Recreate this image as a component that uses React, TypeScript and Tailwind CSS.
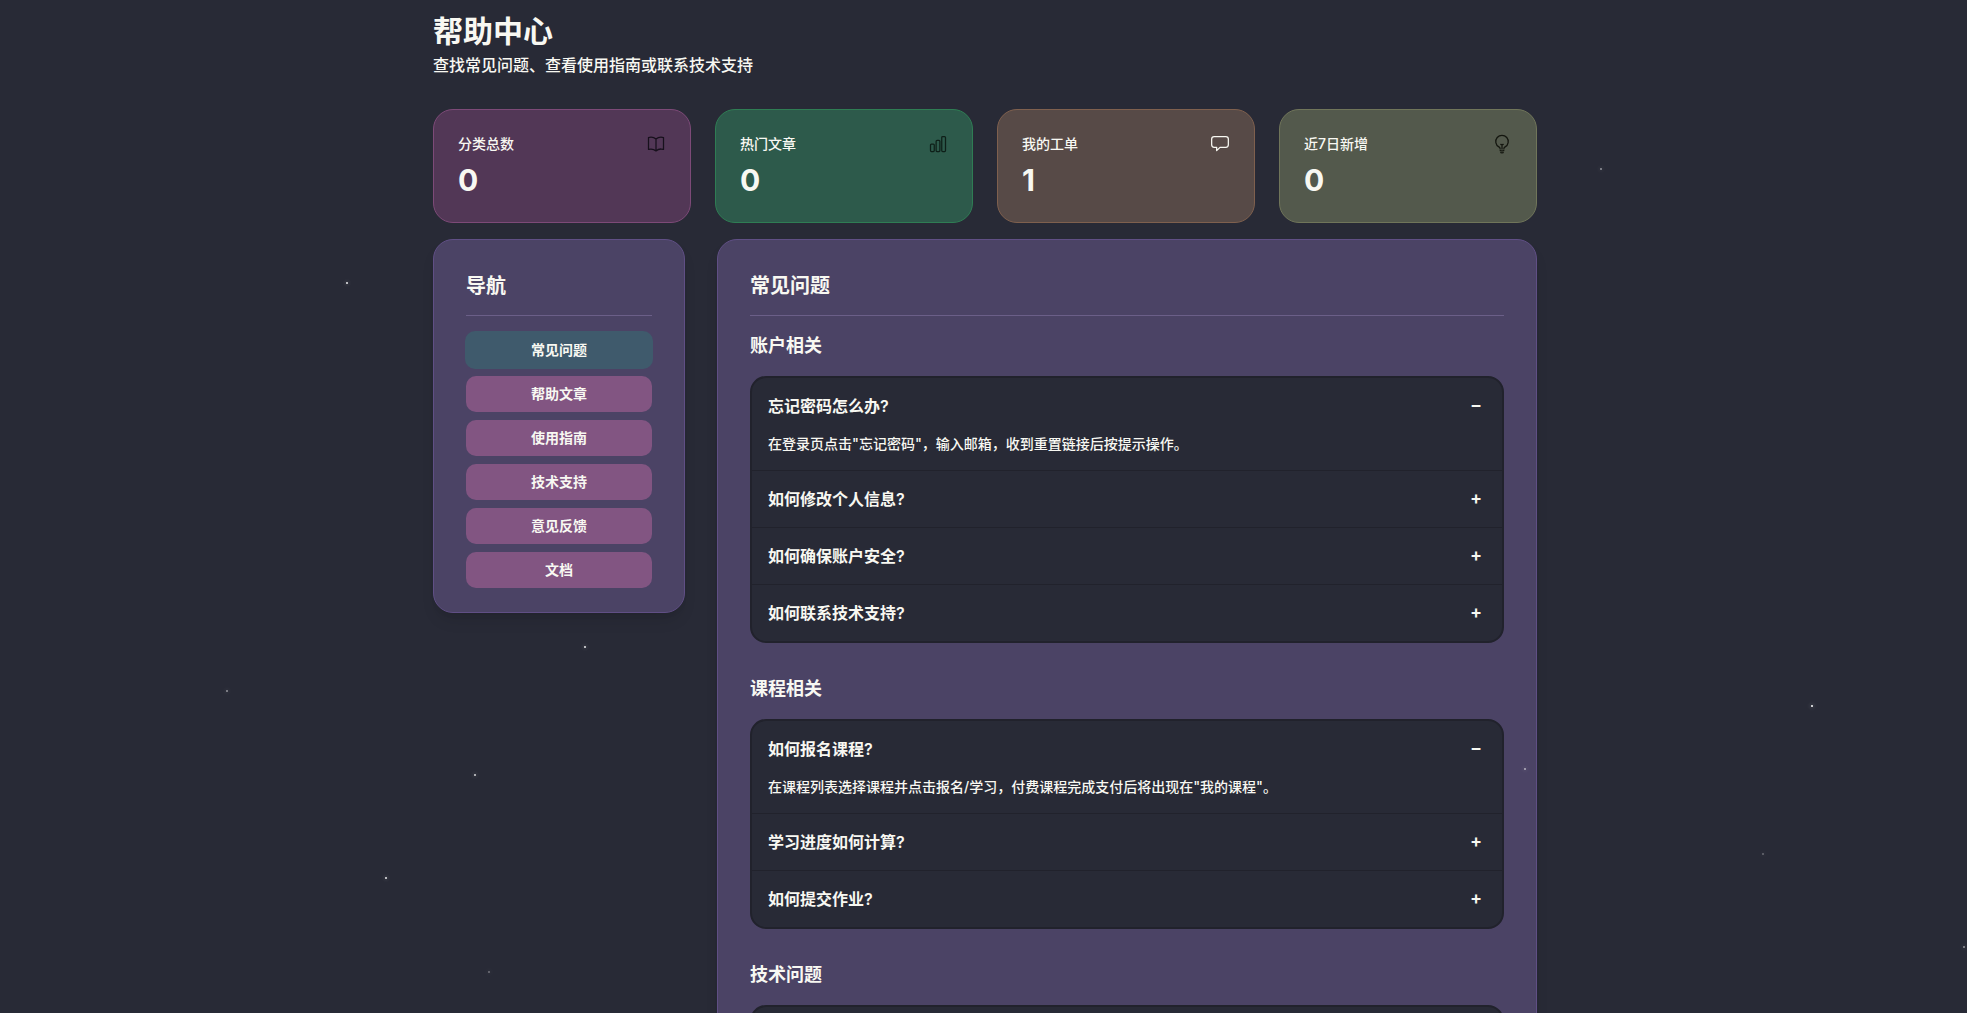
import { HiOutlineBookOpen, HiOutlineChartBar, HiOutlineLightBulb } from 'react-icons/hi2';

const font = "font-['Inter','Noto_Sans_CJK_SC',sans-serif]";

const stars = [
  'left-[346px] top-[282px] opacity-90',
  'left-[1600px] top-[168px] opacity-50',
  'left-[584px] top-[646px] opacity-90',
  'left-[226px] top-[690px] opacity-50',
  'left-[474px] top-[774px] opacity-80',
  'left-[385px] top-[877px] opacity-90',
  'left-[488px] top-[971px] opacity-35',
  'left-[1811px] top-[705px] opacity-100',
  'left-[1524px] top-[768px] opacity-60',
  'left-[1762px] top-[853px] opacity-30',
  'left-[1963px] top-[946px] opacity-50',
];

function StatCard({ label, value, box, iconColor, icon }: { label: string; value: string; box: string; iconColor: string; icon: React.ReactNode }) {
  return (
    <div className={`rounded-[20px] border p-6 ${box}`}>
      <div className="flex items-start justify-between">
        <div className="text-sm leading-5 font-medium text-[#f8f8f2]">{label}</div>
        <div className={iconColor}>{icon}</div>
      </div>
      <div className="mt-2 text-3xl leading-9 font-bold text-[#f8f8f2]">{value}</div>
    </div>
  );
}

function FaqGroup({ title, items, className }: { title: string; items: { q: string; a?: string }[]; className?: string }) {
  return (
    <div className={className}>
      <h3 className="mb-4 text-lg leading-7 font-semibold text-[#f8f8f2]">{title}</h3>
      <div className="overflow-hidden rounded-2xl border-2 border-[#21222c] bg-[#282a36]">
        {items.map((item, i) => (
          <div key={item.q} className={i > 0 ? 'border-t border-[#21222c]' : ''}>
            <div className="flex items-center justify-between py-4 pl-4 pr-[14px]">
              <span className="text-base leading-6 font-semibold text-[#f8f8f2]">{item.q}</span>
              <span className="mb-[2px] w-6 text-center text-lg leading-[22px] font-semibold text-[#f8f8f2]">{item.a ? '−' : '+'}</span>
            </div>
            {item.a && <p className="px-4 pb-4 text-sm leading-5 font-medium text-[#f8f8f2]">{item.a}</p>}
          </div>
        ))}
      </div>
    </div>
  );
}

export default function App() {
  const nav = ['帮助文章', '使用指南', '技术支持', '意见反馈', '文档'];

  return (
    <div className={`relative h-screen overflow-hidden bg-[#282a36] ${font}`}>
      <div className="ml-[433px] w-[1104px] pt-[13px]">
        <h1 className="text-3xl leading-9 font-bold text-[#f8f8f2]">帮助中心</h1>
        <p className="mt-1 text-base leading-6 font-medium text-[#f8f8f2]">查找常见问题、查看使用指南或联系技术支持</p>

        <div className="mt-8 grid grid-cols-4 gap-6">
          <StatCard label="分类总数" value="0" box="bg-[#523756] border-[#7d4a78]" iconColor="text-[#17101c]" icon={<HiOutlineBookOpen className="h-5 w-5" />} />
          <StatCard label="热门文章" value="0" box="bg-[#2d5a4b] border-[#2f7d54]" iconColor="text-[#0e1f18]" icon={<HiOutlineChartBar className="h-5 w-5" />} />
          <StatCard
            label="我的工单"
            value="1"
            box="bg-[#574a47] border-[#7f604e]"
            iconColor="text-[#f8f8f2]"
            icon={
              <svg className="h-5 w-5" viewBox="0 0 24 24" fill="none" stroke="currentColor" strokeWidth={1.5} strokeLinejoin="round">
                <path d="M5 3h14a3 3 0 0 1 3 3v7a3 3 0 0 1-3 3h-7l-4 4v-4H5a3 3 0 0 1-3-3V6a3 3 0 0 1 3-3z" />
              </svg>
            }
          />
          <StatCard label="近7日新增" value="0" box="bg-[#53594c] border-[#70755a]" iconColor="text-[#14160f]" icon={<HiOutlineLightBulb className="h-5 w-5" />} />
        </div>

        <div className="mt-4 flex items-start gap-8">
          <aside className="w-[252px] shrink-0 rounded-[20px] border border-[#604f85] bg-[#4b4365] px-8 pt-8 pb-6 shadow-lg">
            <h2 className="border-b border-[#6b5f88] pb-[15px] text-xl leading-7 font-semibold text-[#f8f8f2]">导航</h2>
            <div className="mt-4 flex flex-col gap-2">
              <button className="-mx-px -my-px h-[38px] rounded-[10px] bg-[#3f5a6c] text-sm font-semibold text-[#f8f8f2]">常见问题</button>
              {nav.map((n) => (
                <button key={n} className="h-9 rounded-[10px] bg-[#825582] text-sm font-semibold text-[#f8f8f2]">{n}</button>
              ))}
            </div>
          </aside>

          <main className="min-w-0 flex-1 rounded-[20px] border border-[#604f85] bg-[#4b4365] p-8 shadow-lg">
            <h2 className="border-b border-[#6b5f88] pb-[15px] text-xl leading-7 font-semibold text-[#f8f8f2]">常见问题</h2>
            <FaqGroup
              className="mt-4"
              title="账户相关"
              items={[
                { q: '忘记密码怎么办?', a: '在登录页点击"忘记密码"，输入邮箱，收到重置链接后按提示操作。' },
                { q: '如何修改个人信息?' },
                { q: '如何确保账户安全?' },
                { q: '如何联系技术支持?' },
              ]}
            />
            <FaqGroup
              className="mt-8"
              title="课程相关"
              items={[
                { q: '如何报名课程?', a: '在课程列表选择课程并点击报名/学习，付费课程完成支付后将出现在"我的课程"。' },
                { q: '学习进度如何计算?' },
                { q: '如何提交作业?' },
              ]}
            />
            <div className="mt-8">
              <h3 className="mb-4 text-lg leading-7 font-semibold text-[#f8f8f2]">技术问题</h3>
              <div className="h-14 rounded-2xl border-2 border-[#21222c] bg-[#282a36]" />
            </div>
          </main>
        </div>
      </div>

      {stars.map((s) => (
        <span key={s} className={`pointer-events-none absolute h-[2px] w-[2px] rounded-full bg-white shadow-[0_0_4px_rgba(255,255,255,0.6)] ${s}`} />
      ))}
    </div>
  );
}
